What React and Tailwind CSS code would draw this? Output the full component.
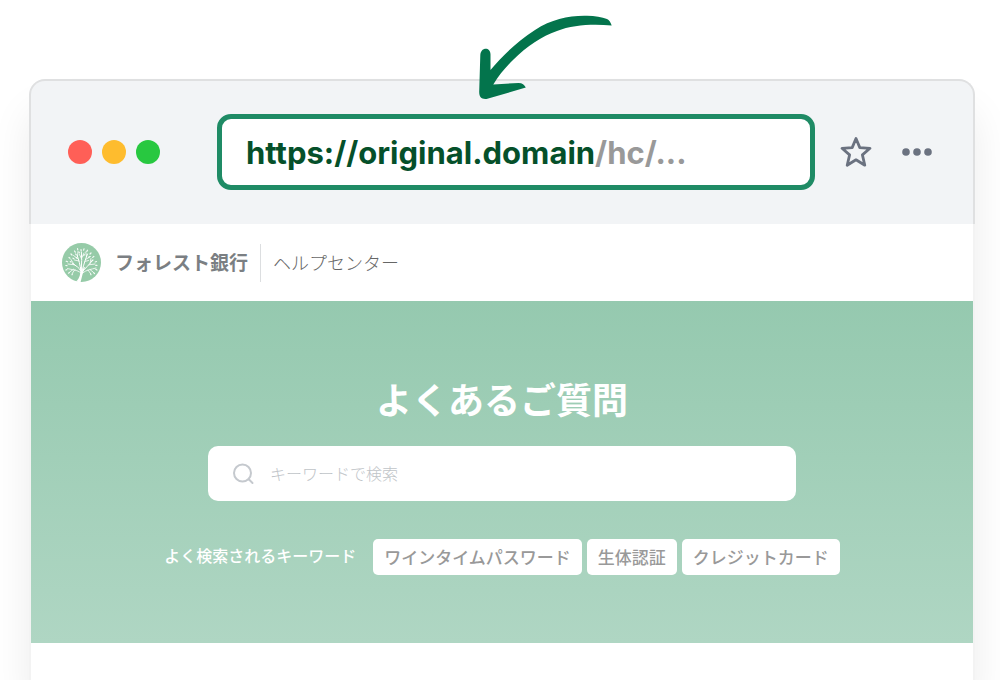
import { useState } from "react";

const keywords = ["ワインタイムパスワード", "生体認証", "クレジットカード"];

function ArrowMark() {
  return (
    <svg
      className="absolute -top-[66px] left-[446px] w-[136px] h-[86px]"
      viewBox="0 0 136 86"
      fill="#03744c"
      aria-hidden="true"
    >
      <path d="M134.7 10.5C133.8 7.6 132.3 5.2 130 4C125 2 118 1 110 .8C92 .4 75 4 58 15C40 27 26 40 13.5 55V39.5C13.5 31.8 3.8 32 3.3 40L2.2 77C2.2 82 4.5 84.4 9.5 83.9L48.8 72.6C47.3 69.5 45.5 67.9 41.5 67.9L16.3 69.5C22 60 28.5 52.5 36 45C43 38 50 32 58 27C65 22.5 72 18.8 80 16C96 9.5 117 8.8 134.7 10.5Z" />
    </svg>
  );
}

function TreeLogo() {
  return (
    <svg className="size-[39px]" viewBox="0 0 39 39" aria-hidden="true">
      <circle cx="19.5" cy="19.5" r="19.5" fill="#96cba8" />
      <path
        d="M14 38.5C18 35 18.8 30.5 18 24L19.2 24L20.4 27.5L22 24L23 24.5C20.8 29 20 34 18.6 39C17 39 15.5 38.9 14 38.5Z"
        fill="#fff"
      />
      <g stroke="#fff" strokeLinecap="round" fill="none" strokeWidth="1">
        <path d="M18.8 28C17.5 24.5 14 23 10.5 20.5M18.8 27C18 22 17 17 15 12M19.3 26C19.8 20 19.8 15 19.4 9M20.3 27C22 21 23.5 16 25.5 11M20.5 28.5C23.5 25 27 22 30 18" />
        <path
          d="M19 30C15 26.5 10 27 5.5 25.5M20.5 30C25 26.5 29 26.5 34 25M11.5 26.2L8 28.8M13 26.5L10.5 30M28 26.6L31 29M26 27L28.5 30.5M12.5 21.8L6 21M12 21.5L9 16.5M16.2 16L11.5 12.5M15.5 13.5L16 8.5M17 18L12.5 17M19.7 15L22 10M19.6 16L17.5 11.5M23.5 16.5L28.5 13.5M24.5 14L23.8 9M22.8 18.5L26.5 17.5M27 21.8L33 21M28 20.5L29 15.5"
          strokeWidth=".8"
        />
      </g>
      <g
        stroke="#fff"
        strokeLinecap="round"
        fill="none"
        strokeWidth="1.2"
        strokeOpacity=".9"
      >
        <path d="M19 6.5L19.2 7.8M22 5.8L21.6 7.2M15.5 5.5L15.8 7M12.5 8L13.3 9.2M25.5 7.2L24.8 8.4M9 11L10 12M29 10L28 11M7 14.5L8 15.2M31.8 13.5L30.7 14.4M4.2 18.2L5.6 18.8M34.5 18.5L33.2 19M3.8 22.5L5 22.6M35 22.3L33.8 22.4M3.8 27L5 26.6M35 27L33.9 26.4M6.5 30.2L7.5 29.4M32.5 30.5L31.5 29.6M10 31.8L10.5 30.8M29 31.8L28.5 30.8M11 15.2L11.9 15.8M26.7 14.2L27.4 13.6M17 9L17.4 10M21.8 12.6L22.3 11.6M13.7 11L14.1 11.8M31 17L30 17.8M8.3 18.6L9.2 19M14.2 14.5L14.9 15" />
      </g>
    </svg>
  );
}

function BrowserBar() {
  return (
    <div className="relative flex items-center h-[145px] pl-[37px] pr-10 pb-[2px] bg-[#f2f4f6] border-2 border-b-0 border-[#dfe0e1] rounded-t-2xl">
      <ArrowMark />
      <div className="flex gap-[10px]">
        <span className="size-6 rounded-full bg-[#ff5f57]" />
        <span className="size-6 rounded-full bg-[#febc2e]" />
        <span className="size-6 rounded-full bg-[#28c840]" />
      </div>
      <div
        role="textbox"
        aria-label="URL"
        className="flex-1 flex items-center h-[76px] ml-[57px] mr-6 px-6 pt-1 bg-white border-5 border-[#1f8b65] rounded-[14px] font-['Inter',sans-serif] text-[31px] font-bold text-[#05502a] whitespace-nowrap"
      >
        https://original.domain
        <span className="text-[#999]">/hc/...</span>
      </div>
      <button type="button" aria-label="Bookmark" className="text-[#6b7280]">
        <svg
          className="size-[34px]"
          viewBox="0 0 34 34"
          fill="none"
          stroke="currentColor"
          strokeWidth="2.8"
          strokeLinejoin="round"
        >
          <path d="M17 3.5L20.8 12.6L31 13.3L23.4 19.9L25.8 30.2L17 24.8L8.2 30.2L10.6 19.9L3 13.3L13.2 12.6Z" />
        </svg>
      </button>
      <button type="button" aria-label="Menu" className="ml-7 text-[#6b7280]">
        <svg className="w-8 h-8" viewBox="0 0 32 32" fill="currentColor">
          <circle cx="5" cy="16" r="3.8" />
          <circle cx="16" cy="16" r="3.8" />
          <circle cx="27" cy="16" r="3.8" />
        </svg>
      </button>
    </div>
  );
}

export default function App() {
  const [query, setQuery] = useState("");

  return (
    <div className="min-h-screen flex flex-col overflow-hidden bg-white pt-[79px] pl-[29px] pr-[25px] font-['Noto_Sans_CJK_JP',sans-serif]">
      <div className="flex-1 flex flex-col rounded-t-2xl bg-white shadow-[0_32px_40px_rgba(0,0,0,0.08)]">
        <BrowserBar />

        <div className="flex-1 border-x-2 border-[#f3f3f3]">
          {/* Site header */}
          <header className="flex items-center h-[77px] px-[31px]">
            <TreeLogo />
            <span className="ml-[14px] pb-[2px] text-[19px] leading-7 font-bold text-[#7b7f83]">
              フォレスト銀行
            </span>
            <span className="w-px h-[38px] mx-3 bg-[#dcdee0]" />
            <span className="pb-[2px] text-[18px] leading-7 font-light text-[#666]">
              ヘルプセンター
            </span>
          </header>

          {/* Search */}
          <main className="flex flex-col items-center h-[342px] pt-[71px] bg-linear-to-b from-[#95c9af] to-[#afd6c3]">
            <h1 className="text-[36px] leading-[52px] font-bold text-white">
              よくあるご質問
            </h1>
            <label className="flex items-center w-full max-w-[588px] h-[55px] mt-[22px] px-6 bg-white rounded-[10px]">
              <svg
                className="size-6 shrink-0"
                viewBox="0 0 24 24"
                fill="none"
                stroke="#c5c9ce"
                strokeWidth="2"
                strokeLinecap="round"
                aria-hidden="true"
              >
                <circle cx="10.5" cy="11" r="8.5" />
                <path d="M17 17.5L20.5 21" />
              </svg>
              <input
                type="text"
                value={query}
                onChange={(e) => setQuery(e.target.value)}
                placeholder="キーワードで検索"
                aria-label="キーワードで検索"
                className="flex-1 ml-[14px] pb-[2px] text-[16px] font-light text-gray-700 placeholder:text-[#c0c4c8] outline-none"
              />
            </label>
            <div className="flex items-center gap-[5px] mt-[38px]">
              <span className="mr-3 pb-1 text-[16px] leading-6 font-medium text-white">
                よく検索されるキーワード
              </span>
              {keywords.map((word) => (
                <button
                  key={word}
                  type="button"
                  onClick={() => setQuery(word)}
                  className="h-9 px-[11px] bg-white rounded-[5px] text-[17px] leading-6 font-medium text-[#999]"
                >
                  {word}
                </button>
              ))}
            </div>
          </main>
        </div>
      </div>
    </div>
  );
}
